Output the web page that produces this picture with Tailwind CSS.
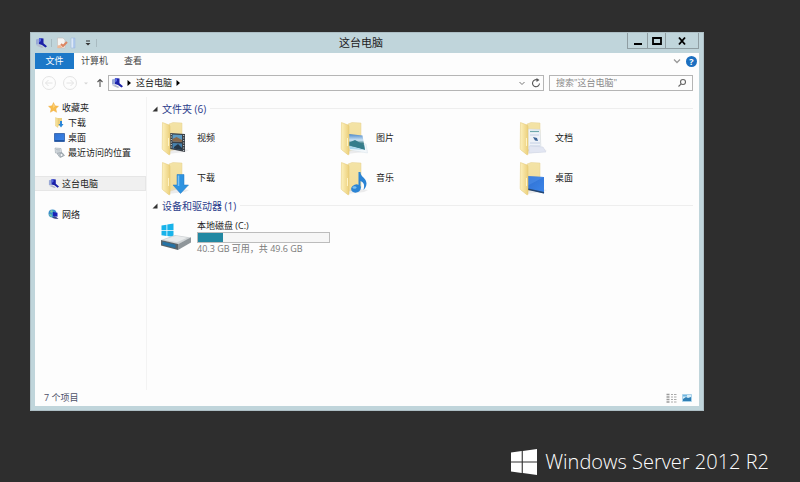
<!DOCTYPE html>
<html lang="zh-CN">
<head>
    <meta charset="UTF-8">
    <meta name="viewport" content="width=device-width, initial-scale=1.0">
    <title>这台电脑</title>
    <script src="https://cdn.jsdelivr.net/npm/@tailwindcss/browser@4"></script>
</head>
<body class="bg-[#2e2e2e] min-h-screen flex flex-col font-['Open_Sans','Noto_Sans_CJK_SC',sans-serif] text-[9px] leading-3 text-[#222]">

    <!-- shared icons -->
    <svg class="absolute w-0 h-0" aria-hidden="true">
        <defs>
            <linearGradient id="front" x1="0" x2="1"><stop offset="0" stop-color="#fdf1bd"/><stop offset="1" stop-color="#ecd07c"/></linearGradient>
            <linearGradient id="back" x1="0" y1="0" x2="0" y2="1"><stop offset="0" stop-color="#f3e3a6"/><stop offset="1" stop-color="#f3dc98"/></linearGradient>
            <linearGradient id="blue" x1="0" y1="0" x2="1" y2="1"><stop offset="0" stop-color="#2f6fd0"/><stop offset="1" stop-color="#3c86ea"/></linearGradient>
            <linearGradient id="sky" x1="0" y1="0" x2="0" y2="1"><stop offset="0" stop-color="#4a86c8"/><stop offset=".4" stop-color="#cfe6f6"/><stop offset=".6" stop-color="#3f7f86"/><stop offset="1" stop-color="#9fd3ec"/></linearGradient>
        </defs>
        <symbol id="pc" viewBox="0 0 12 12">
            <path d="M1 2.500L4.500 1.500v6L1 7.500z" fill="#9aa9d6"/>
            <path d="M4 1l4.500.6v4.600L12 9.300 10.500 10.500 7 8 4 7z" fill="#1c22a8"/>
            <path d="M4 1l2 .3v2.700L4 5.500z" fill="#5566e0"/>
            <path d="M1 8.500L4.500 8l4 2-1.500 1z" fill="#b4b9cc"/>
        </symbol>
        <symbol id="folder" viewBox="0 0 32 36">
            <path d="M9 4l4-1.500 9 .5v24.500L9 31.500z" fill="url(#back)" stroke="#e6d192" stroke-width=".5"/>
            <path d="M7 34l18-2 4-2-16-2z" fill="#d9d9dc" opacity=".5"/>
        </symbol>
        <symbol id="flap" viewBox="0 0 32 36">
            <path d="M2.500 2.500L9 5c.6.300 1 .8 1 1.500v27.500c0 .8-.5 1-1.200.7L3 30c-.6-.5-.8-1-.8-1.700z" fill="url(#front)" stroke="#e2c671" stroke-width=".5"/>
            <path d="M8.500 18v8" stroke="#fff3c4" stroke-width="1"/>
        </symbol>
    </svg>

    <main class="flex-1 flex flex-col mt-8 ml-[30px] mr-24 bg-[#c0d5db] border border-[#aebfc5] px-1 pb-1">
        <header class="h-5 flex items-start">
            <div class="flex-1 flex items-center h-5">
                <svg class="w-3 h-3"><use href="#pc"/></svg>
                <span class="w-px h-2 bg-[#a9bbc1] mx-1"></span>
                <button aria-label="属性">
                    <svg class="w-3 h-3 block" viewBox="0 0 12 12"><path d="M1.500 1H7l2 2v8H1.500z" fill="#f6f5f3" stroke="#c4bdbb" stroke-width=".6"/><path d="M5 7l2 2 4-4" fill="none" stroke="#dc8560" stroke-width="2"/><path d="M1.500 8.500l3-.5 2 3h-5z" fill="#efb896"/></svg>
                </button>
                <button aria-label="新建文件夹">
                    <svg class="w-3 h-3 block" viewBox="0 0 12 12"><path d="M3 1h4v10H3z" fill="#dce8f6" stroke="#a6c0e3" stroke-width=".7"/><path d="M6 1v10" stroke="#8cb0e6"/></svg>
                </button>
                <button aria-label="自定义快速访问工具栏" class="ml-1">
                    <svg class="w-2 h-2 block" viewBox="0 0 8 8"><path d="M2 2h4" stroke="#333"/><path d="M1.500 4h5L4 6.500z" fill="#333"/></svg>
                </button>
                <span class="w-px h-2 bg-[#a9bbc1] ml-1"></span>
            </div>
            <h1 class="text-[11px] leading-5 mr-3">这台电脑</h1>
            <div class="flex-1 flex justify-end">
                <button aria-label="最小化" class="w-[21px] h-4 border border-t-0 border-[#8f9da2] flex items-center justify-center"><svg class="w-3 h-3" viewBox="0 0 12 12"><path d="M2 9h8" stroke="#000" stroke-width="2"/></svg></button>
                <button aria-label="最大化" class="w-[18px] h-4 border-b border-r border-[#8f9da2] flex items-center justify-center"><svg class="w-3 h-3" viewBox="0 0 12 12"><path d="M2 3h8v6H2z" fill="none" stroke="#000" stroke-width="1.800"/></svg></button>
                <button aria-label="关闭" class="w-[33px] h-4 border-b border-r border-[#8f9da2] flex items-center justify-center"><svg class="w-3 h-3" viewBox="0 0 12 12"><path d="M3 2.500l6 7M9 2.500l-6 7" stroke="#000" stroke-width="1.900"/></svg></button>
            </div>
        </header>

        <div class="flex-1 flex flex-col bg-[#fdfdfd]">
            <nav class="h-4 flex items-center">
                <a href="#" class="w-[39px] h-4 leading-4 bg-[#1c78c8] text-white text-center">文件</a>
                <a href="#" class="ml-[7px] text-[#444]">计算机</a>
                <a href="#" class="ml-4 text-[#444]">查看</a>
                <button aria-label="展开功能区" class="ml-auto"><svg class="w-2 h-2 block" viewBox="0 0 8 8"><path d="M1 2.500l3 3 3-3" fill="none" stroke="#999" stroke-width="1.300"/></svg></button>
                <button aria-label="帮助" class="ml-[5px] mr-[2px] size-[11px] rounded-full bg-[#1b6fc0] text-white font-bold leading-[11px]">?</button>
            </nav>

            <div class="h-7 flex items-center pl-[6px] pr-[6px]">
                <button aria-label="后退"><svg class="w-4 h-4 block" viewBox="0 0 16 16" fill="none" stroke="#e4e4e4"><circle cx="8" cy="8" r="6.500"/><path d="M11.500 8h-7M7.500 5l-3 3 3 3"/></svg></button>
                <button aria-label="前进" class="ml-[5px]"><svg class="w-4 h-4 block" viewBox="0 0 16 16" fill="none" stroke="#e4e4e4"><circle cx="8" cy="8" r="6.500"/><path d="M4.500 8h7M8.500 5l3 3-3 3"/></svg></button>
                <button aria-label="最近位置" class="ml-1"><svg class="w-2 h-2 block" viewBox="0 0 8 8"><path d="M2 3.500h4L4 5.500z" fill="#d5d5d5"/></svg></button>
                <button aria-label="上移" class="ml-1"><svg class="w-3 h-3 block" viewBox="0 0 12 12"><path d="M6 10V2.500M3.500 5L6 2.500 8.500 5" fill="none" stroke="#555" stroke-width="1.100"/></svg></button>
                <div class="flex-1 h-4 ml-[2px] border border-[#b5b5b5] flex items-center pl-[2px]">
                    <svg class="w-3 h-3"><use href="#pc"/></svg>
                    <svg class="w-2 h-2 ml-[2px]" viewBox="0 0 8 8"><path d="M2.500 1l3.500 3-3.500 3z" fill="#000"/></svg>
                    <a href="#" class="ml-[3px]">这台电脑</a>
                    <svg class="w-2 h-2 ml-[2px]" viewBox="0 0 8 8"><path d="M2.500 1l3.500 3-3.500 3z" fill="#000"/></svg>
                    <button aria-label="历史记录" class="ml-auto"><svg class="w-2 h-2 block" viewBox="0 0 8 8"><path d="M1.500 3L4 5.500 6.500 3" fill="none" stroke="#777"/></svg></button>
                    <button aria-label="刷新" class="ml-[5px] mr-[2px]"><svg class="w-[10px] h-[10px] block" viewBox="0 0 10 10"><path d="M8.500 5.500A3.500 3.500 0 1 1 6.500 2" fill="none" stroke="#555" stroke-width="1.100"/><path d="M5.500 0l3 2-3 2z" fill="#555"/></svg></button>
                </div>
                <label class="w-36 h-4 ml-[5px] border border-[#b5b5b5] flex items-center pl-[6px] pr-[5px]">
                    <input type="text" aria-label="搜索" placeholder='搜索"这台电脑"' class="flex-1 min-w-0 outline-none placeholder:text-[#8a8a8a]">
                    <svg class="w-[10px] h-[10px]" viewBox="0 0 10 10" fill="none" stroke="#666" stroke-width="1.100"><circle cx="6" cy="4" r="2.500"/><path d="M4.200 5.800L1.500 8.500"/></svg>
                </label>
            </div>

            <div class="flex-1 flex">
                <aside class="w-[112px] pt-[3px] border-r border-[#f3f3f3]">
                    <ul>
                        <li><a href="#" class="flex items-center h-[15px] pl-[13px] gap-[3px]">
                            <svg class="w-[11px] h-[11px]" viewBox="0 0 11 11"><path d="M5.500.5l1.500 3.300 3.500.5-2.600 2.400.7 3.600-3.100-1.800-3.100 1.800.7-3.600L.5 4.300 4 3.800z" fill="#f8bd4e" stroke="#eda83a" stroke-width=".4"/><path d="M5.500 1.500L6.600 4.300 5.500 6z" fill="#fde3a4"/></svg>
                            收藏夹</a></li>
                        <li><a href="#" class="flex items-center h-[15px] pl-[19px] gap-[3px]">
                            <svg class="w-[11px] h-[11px]" viewBox="0 0 11 11"><path d="M3.500 1H8v7L3.500 9z" fill="#ecd081"/><path d="M1.500.5L4 1.500V10.500L1.500 9z" fill="#f6df93" stroke="#dcbc62" stroke-width=".3"/><path d="M6 4h2v3h1.500L7 10.500 4.500 7H6z" fill="#2a86d8"/></svg>
                            下载</a></li>
                        <li><a href="#" class="flex items-center h-[15px] pl-[19px] gap-[3px]">
                            <svg class="w-[11px] h-[11px]" viewBox="0 0 11 11"><path d="M.5 1.500h10v8H.5z" fill="url(#blue)" stroke="#1d4f9c" stroke-width=".7"/><path d="M1 8.800h9" stroke="#17458a"/></svg>
                            桌面</a></li>
                        <li><a href="#" class="flex items-center h-[15px] pl-[19px] gap-[3px]">
                            <svg class="w-[11px] h-[11px]" viewBox="0 0 11 11"><path d="M1 1l6 .5.500 4-6 .5z" fill="#dfe4e8" stroke="#9ba5ad" stroke-width=".6"/><path d="M2 2.500l4 .3M2.300 4h4" stroke="#9ba5ad" stroke-width=".6"/><path d="M3 6.500l5-1 2.500 3-4.500 2z" fill="#c8ced4" stroke="#8c979f" stroke-width=".6"/><circle cx="7.500" cy="8" r="1.600" fill="#f2f4f6" stroke="#76838c" stroke-width=".6"/></svg>
                            最近访问的位置</a></li>
                        <li class="mt-4"><a href="#" class="flex items-center h-[15px] pl-[13px] gap-[3px] bg-[#f0f0f0] border border-[#e6e6e6] border-l-0">
                            <svg class="w-[11px] h-[11px]"><use href="#pc"/></svg>
                            这台电脑</a></li>
                        <li class="mt-4"><a href="#" class="flex items-center h-[15px] pl-[13px] gap-[3px]">
                            <svg class="w-[11px] h-[11px]" viewBox="0 0 11 11"><circle cx="4.500" cy="4.500" r="4" fill="#3a8fc9"/><path d="M2 2l2-1 1 1.500-2 1.500zM1 5l2.500.5L4 8 2 7z" fill="#7cc6a0"/><path d="M5 3l4.500.7v4L5 7z" fill="#1b22b5"/><path d="M6 7.500l2 .3L10.500 10 7 9.800l-3-1z" fill="#3b4487"/></svg>
                            网络</a></li>
                    </ul>
                </aside>

                <section class="flex-1 pl-[5px] pr-[2px] pt-1">
                    <h2 class="flex items-center h-[15px] text-[10px] text-[#2a3c8c]">
                        <svg class="w-[6px] h-[6px] mr-1" viewBox="0 0 6 6"><path d="M5.500.5v5h-5z" fill="#333"/></svg>
                        文件夹 (6)
                        <span class="flex-1 h-px bg-[#eeeeee] mx-1"></span>
                    </h2>
                    <ul class="grid grid-cols-3 pl-2 pt-[2px]">
                        <li><a href="#" class="flex items-center h-10 gap-[5px]">
                            <svg class="w-8 h-9" viewBox="0 0 32 36"><use href="#folder"/><path d="M10 13l15 1v18l-15-3z" fill="#3b4148"/><path d="M12.500 14.500l9.500.6v7l-9.500-.6z" fill="#5f9cc4"/><path d="M12.500 19l4-2 5.500 3v2l-9.500-.6z" fill="#8a6a4c"/><path d="M12.500 23l9.500.6v6.500l-9.500-1.800z" fill="#4782ad"/><path d="M14 27l4-3 4 4v2l-8-1.500z" fill="#263747"/><path d="M11.300 14v15M23.700 15v16" stroke="#d6dce0" stroke-dasharray="1 1.500"/><use href="#flap"/></svg>
                            视频</a></li>
                        <li><a href="#" class="flex items-center h-10 gap-[5px]">
                            <svg class="w-8 h-9" viewBox="0 0 32 36"><use href="#folder"/><path d="M9 21l18 3 1.500 9L11 30z" fill="#f2f7fa" stroke="#cfdbe2" stroke-width=".4"/><path d="M10 14l13.500 1.500 2.500 14L9 26z" fill="url(#sky)"/><path d="M9 23l7-3 9 5 1 5-17-5z" fill="#357d8b"/><path d="M10 26l16 4-15-1z" fill="#a9d7ed"/><use href="#flap"/></svg>
                            图片</a></li>
                        <li><a href="#" class="flex items-center h-10 gap-[5px]">
                            <svg class="w-8 h-9" viewBox="0 0 32 36"><use href="#folder"/><path d="M10 9l12 .5 1 19-13 1z" fill="#eef2f8" stroke="#cdd4df" stroke-width=".5"/><path d="M12 11.500h9" stroke="#6fa8ad" stroke-width="1.200"/><path d="M12 15h9M12 23h10M12 26h10" stroke="#b9c7de" stroke-width=".8"/><path d="M15 17l4 1 1 3-3-.5z" fill="#3f6598"/><path d="M11 26l14 1 3 5-17 1z" fill="#e2e6f2" stroke="#ccd2e2" stroke-width=".5"/><use href="#flap"/></svg>
                            文档</a></li>
                        <li><a href="#" class="flex items-center h-10 gap-[5px]">
                            <svg class="w-8 h-9" viewBox="0 0 32 36"><use href="#folder"/><use href="#flap"/><path d="M17 14.500h7V25h4.500L20.500 33.500 13 25h4z" fill="#2e93e0" stroke="#2078c4" stroke-width=".5"/><path d="M18.500 15.500v10.500" stroke="#7cc3f3" stroke-width="1.500"/></svg>
                            下载</a></li>
                        <li><a href="#" class="flex items-center h-10 gap-[5px]">
                            <svg class="w-8 h-9" viewBox="0 0 32 36"><use href="#folder"/><use href="#flap"/><path d="M19.500 12h2c0 5 6 6 6 11.500 0 3-1.500 5-3 6.500 1.200-4 1-7.500-3-9V28h-2z" fill="#2b84d4"/><ellipse cx="17" cy="28.500" rx="5" ry="4" fill="#2b84d4" transform="rotate(-20 17 28.500)"/><ellipse cx="15.500" cy="27.500" rx="2" ry="1.300" fill="#79bdf0"/></svg>
                            音乐</a></li>
                        <li><a href="#" class="flex items-center h-10 gap-[5px]">
                            <svg class="w-8 h-9" viewBox="0 0 32 36"><use href="#folder"/><path d="M9 16l17 1v16.500L9 29z" fill="url(#blue)"/><path d="M9 16l17 1-17 9z" fill="#5a9cf0" opacity=".4"/><path d="M9 29l17 3.800" stroke="#26466f" stroke-width="1.500"/><use href="#flap"/></svg>
                            桌面</a></li>
                    </ul>

                    <h2 class="flex items-center h-[15px] text-[10px] text-[#2a3c8c]">
                        <svg class="w-[6px] h-[6px] mr-1" viewBox="0 0 6 6"><path d="M5.500.5v5h-5z" fill="#333"/></svg>
                        设备和驱动器 (1)
                        <span class="flex-1 h-px bg-[#eeeeee] mx-1"></span>
                    </h2>
                    <a href="#" class="flex items-center pl-2 gap-[5px] pt-[6px]">
                        <svg class="w-8 h-9" viewBox="0 0 32 36">
                            <path d="M1.500 6.500l5-.8v5.300h-5zM7.300 5.600l6.200-1v6.400H7.300zM1.500 11.800h5v5.200l-5-.7zM7.300 11.800h6.200V18l-6.200-.9z" fill="#18b3ea"/>
                            <path d="M1 21l14-5 16 2.500-13 7z" fill="#d0d4d6"/>
                            <path d="M4 20.800l12-4 11 2-10 4.500z" fill="#e9ebec"/>
                            <path d="M1 21l17 4v6L1 26.500z" fill="#5a6368"/>
                            <path d="M2.500 22.500l13 3.200v3.300l-13-3.300z" fill="#2573a5"/>
                            <path d="M18 25.300l13-7v5.200l-13 7.500z" fill="#8f969a"/>
                        </svg>
                        <span>
                            <span class="block">本地磁盘 (C:)</span>
                            <span class="block w-[133px] h-[11px] border border-[#bcbcbc] bg-[#f6f6f6]"><span class="block h-full bg-[#2288a2]" style="width: 19%"></span></span>
                            <span class="block text-[#7a7a7a]">40.3 GB 可用，共 49.6 GB</span>
                        </span>
                    </a>
                </section>
            </div>

            <div class="h-4 flex items-center pl-[9px] pr-[7px] text-[#4c5068]">
                7 个项目
                <button aria-label="详细信息" class="ml-auto"><svg class="w-[11px] h-[10px] block" viewBox="0 0 11 10"><path d="M.5 1.500h3M.5 4h3M.5 6.500h3M.5 9h3" stroke="#9a9a9a" stroke-width="1.400"/><path d="M5 1.500h2M8 1.500h2.500M5 4h2M8 4h2.500M5 6.500h2M8 6.500h2.500M5 9h2M8 9h2.500" stroke="#aaa"/></svg></button>
                <button aria-label="大图标" class="ml-[5px]"><svg class="w-[10px] h-[10px] block" viewBox="0 0 10 10"><path d="M.5 1.500h9v7h-9z" fill="#d6ecf8" stroke="#8ec3e3" stroke-width=".7"/><path d="M1 6l3-2 2 1 3-1v4H1z" fill="#2f7fb5"/><path d="M1 2h4v1.500H1z" fill="#6fb6e0"/></svg></button>
            </div>
        </div>
    </main>

    <footer class="h-[71px] flex items-center justify-end gap-2 pr-[31px] pt-[30px] text-white">
        <svg class="w-[26px] h-[26px]" viewBox="0 0 26 26" fill="#fff"><path d="M0 3.600l10.700-1.500v10.400H0zM11.800 2L26 0v12.500H11.800zM0 13.500h10.700v10.400L0 22.400zM11.800 13.500H26V26l-14.200-2z"/></svg>
        <span class="text-[20px] leading-7 font-light font-['Open_Sans',sans-serif]">Windows Server 2012 R2</span>
    </footer>
</body>
</html>
